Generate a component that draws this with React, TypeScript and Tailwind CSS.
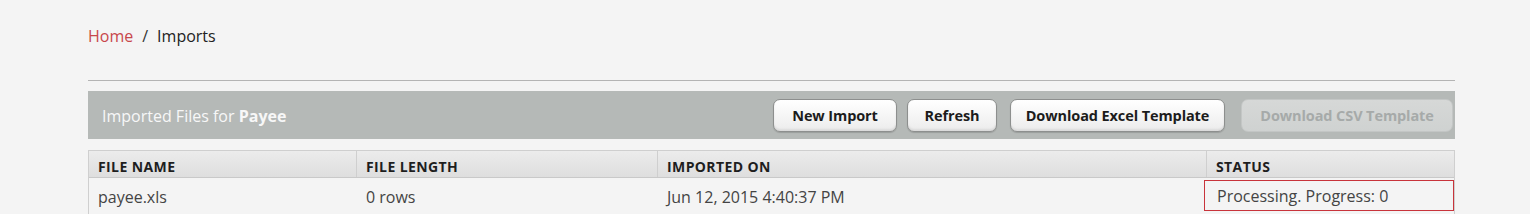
const FONT = { fontFamily: '"Open Sans", "Noto Sans", sans-serif' };

const COLS = "grid grid-cols-[268px_301px_549px_249px]";

function Button({ children, disabled, w }: { children: React.ReactNode; disabled?: boolean; w: string }) {
  return (
    <button
      disabled={disabled}
      className={
        disabled
          ? `${w} h-[33px] pt-[2px] rounded-[7px] border border-[#c3c6c5] bg-gradient-to-b from-[#d6d8d7] to-[#cfd2d1] text-[14.5px] font-bold text-[#a6aaa9] tracking-[-0.1px]`
          : `${w} h-[33px] pt-[2px] rounded-[7px] border border-[#8d8f8e] bg-gradient-to-b from-white to-[#ececec] shadow-[inset_0_-2px_2px_rgba(0,0,0,0.08),0_1px_1px_rgba(0,0,0,0.15)] text-[14.5px] font-bold text-[#1c1c1c] tracking-[-0.1px]`
      }
    >
      {children}
    </button>
  );
}

export default function App() {
  return (
    <div className="w-[1530px] h-[214px] overflow-hidden bg-[#f4f4f4]" style={FONT}>
      <div className="pl-[88px] w-[1455px]">
        <div className="h-[80px] pt-[24px] text-[16px] text-[#222] flex items-start gap-[9px]">
          <a className="text-[#c8474b]">Home</a>
          <span className="text-[#333]">/</span>
          <span>Imports</span>
        </div>
        <div className="border-t border-[#b4b4b4]" />
        <div className="mt-[10px] h-[48px] bg-[#b5b9b7] flex items-center pl-[14px] pr-[2px]">
          <div className="text-[16px] text-[#f7f7f7] pt-[1px]">
            Imported Files for <span className="font-bold">Payee</span>
          </div>
          <div className="ml-auto flex items-center">
            <Button w="w-[124px]">New Import</Button>
            <div className="ml-[10px]">
              <Button w="w-[90px]">Refresh</Button>
            </div>
            <div className="ml-[13px]">
              <Button w="w-[215px]">Download Excel Template</Button>
            </div>
            <div className="ml-[16px]">
              <Button disabled w="w-[212px]">Download CSV Template</Button>
            </div>
          </div>
        </div>
        <div className="mt-[11px] border border-[#cfcfcf]">
          <div className={`${COLS} h-[27px] bg-gradient-to-b from-[#ececec] to-[#dedede] border-b border-[#c9c9c9] text-[14px] font-bold text-[#1e1e1e] tracking-[0.4px]`}>
            {["FILE NAME", "FILE LENGTH", "IMPORTED ON", "STATUS"].map((h, i) => (
              <div
                key={h}
                className={`flex items-center pl-[9px] pt-[4px] ${i < 3 ? "border-r border-[#cfcfcf]" : ""}`}
              >
                {h}
              </div>
            ))}
          </div>
          <div className={`${COLS} h-[36px] bg-[#f4f4f4] text-[16px] text-[#444]`}>
            <div className="flex items-center pl-[9px] pt-[1px]">payee.xls</div>
            <div className="flex items-center pl-[9px] pt-[1px]">0 rows</div>
            <div className="flex items-center pl-[9px] pt-[1px]">Jun 12, 2015 4:40:37 PM</div>
            <div className="py-[2px] pr-[2px] -ml-[3px]">
              <div className="h-[31px] border border-[#c8343b] flex items-center pl-[12px] pt-[1px]">
                Processing. Progress: 0
              </div>
            </div>
          </div>
        </div>
      </div>
    </div>
  );
}
